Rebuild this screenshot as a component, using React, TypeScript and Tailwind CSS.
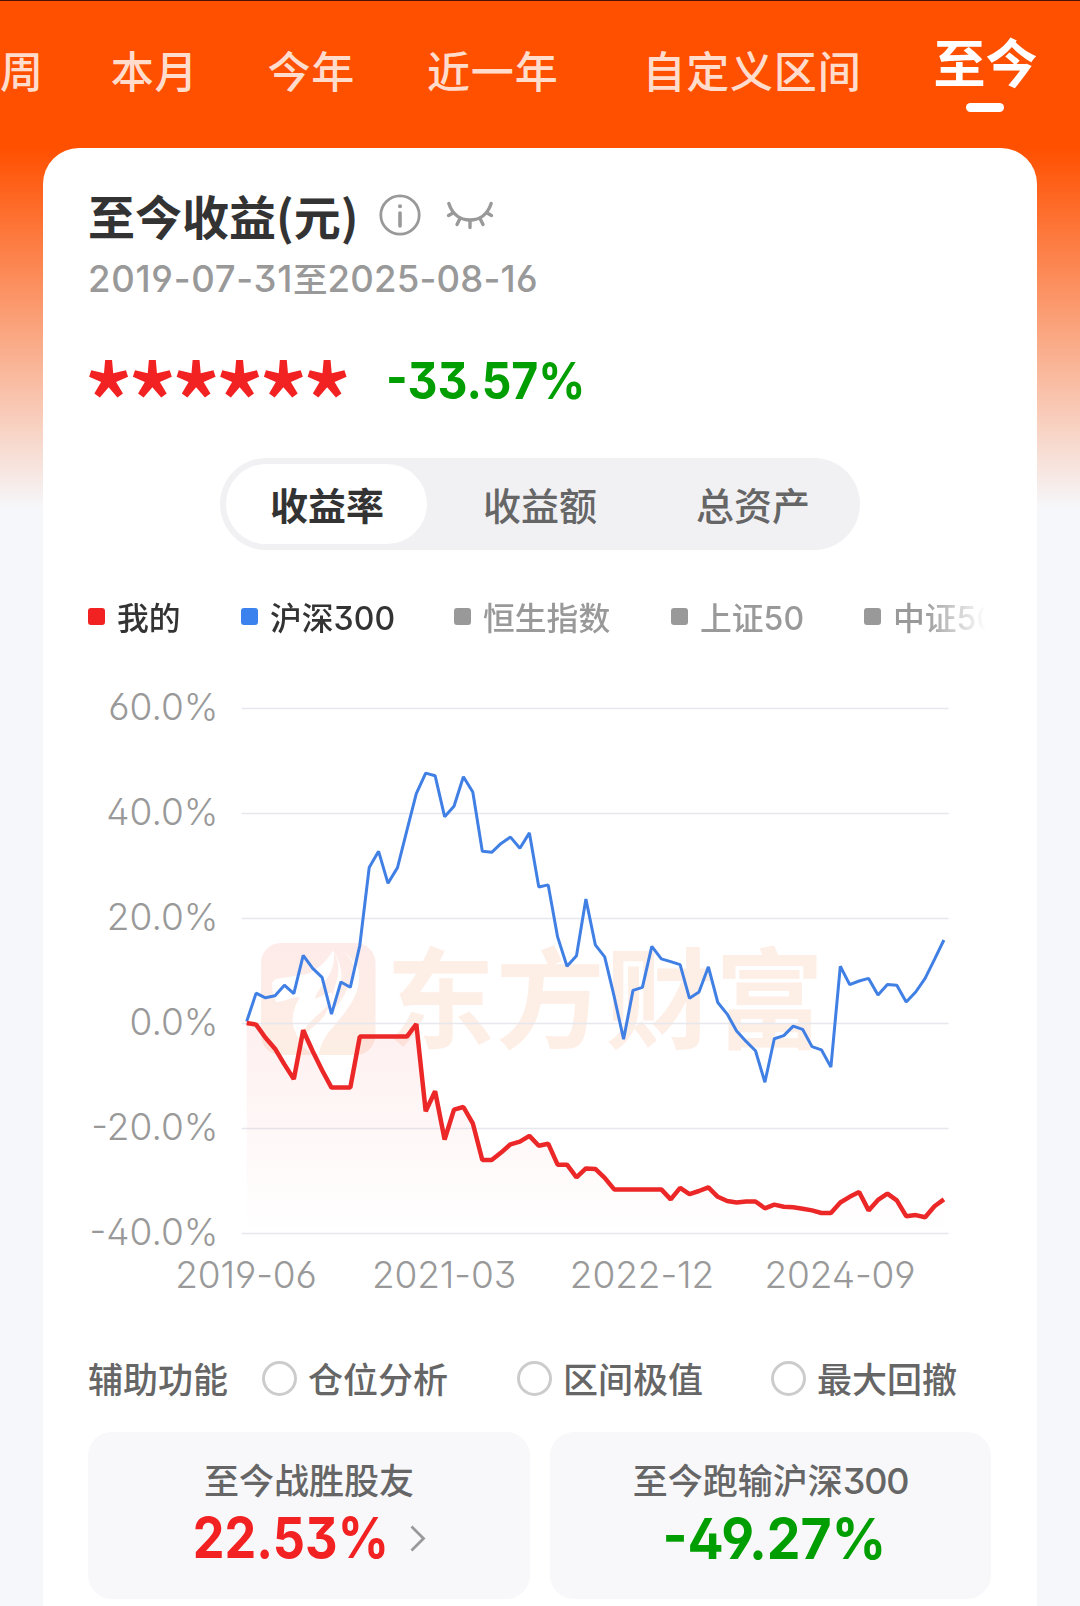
import clsx from 'clsx';

const tabs = [
  { label: '周', className: '' },
  { label: '本月', className: 'ml-[67px]' },
  { label: '今年', className: 'ml-[69px]' },
  { label: '近一年', className: 'ml-[72px]' },
  { label: '自定义区间', className: 'ml-[84px]' },
];

const segments = ['收益率', '收益额', '总资产'];

const legend = [
  { name: '我的', code: '', width: 'w-[153px]', dot: 'bg-[#f32222]', text: 'text-[#333]' },
  { name: '沪深', code: '300', width: 'w-[213px]', dot: 'bg-[#3b82ee]', text: 'text-[#333]' },
  { name: '恒生指数', code: '', width: 'w-[217px]', dot: 'bg-[#999]', text: 'text-[#999]' },
  { name: '上证', code: '50', width: 'w-[193px]', dot: 'bg-[#999]', text: 'text-[#999]' },
  { name: '中证', code: '500', width: 'w-[160px]', dot: 'bg-[#999]', text: 'text-[#999]' },
];

const helpers = [
  { label: '仓位分析', className: 'ml-[34px]' },
  { label: '区间极值', className: 'ml-[69px]' },
  { label: '最大回撤', className: 'ml-[68px]' },
];

// monthly returns in percent
const hs300 = [
  0.4, 5.8, 4.9, 5.3, 7.3, 5.7, 13.0, 10.5, 8.8, 1.8, 7.9, 6.9, 14.9, 29.7, 32.8, 26.7, 29.7, 36.8,
  43.8, 47.7, 47.2, 39.4, 41.4, 47.0, 44.1, 32.8, 32.6, 34.3, 35.5, 33.4, 36.3, 26.0, 26.4, 16.5,
  10.9, 12.9, 23.7, 15.0, 12.7, 5.1, -3.0, 6.3, 6.9, 14.7, 12.3, 11.8, 11.2, 4.8, 6.0, 10.8, 4.0,
  1.8, -1.4, -3.4, -5.2, -11.2, -2.9, -2.3, -0.5, -1.1, -4.4, -5.0, -8.3, 10.9, 7.4, 8.1, 8.6, 5.4,
  7.4, 7.3, 4.1, 6.0, 8.6, 12.2, 15.9,
];

const mine = [
  0.1, -0.2, -2.7, -4.8, -7.8, -10.6, -1.3, -5.3, -8.9, -12.2, -12.2, -12.2, -2.5, -2.5, -2.5, -2.5,
  -2.5, -2.5, -0.1, -16.7, -12.9, -22.1, -16.4, -15.9, -19.0, -26.0, -26.0, -24.6, -23.0, -22.5,
  -21.4, -23.3, -22.9, -26.9, -26.9, -29.3, -27.6, -27.7, -29.4, -31.6, -31.6, -31.6, -31.6, -31.6,
  -31.6, -33.5, -31.3, -32.5, -31.9, -31.2, -33.0, -33.8, -34.1, -33.9, -33.9, -35.2, -34.5, -34.9,
  -35.0, -35.3, -35.6, -36.1, -36.1, -34.1, -33.0, -32.1, -35.6, -33.6, -32.4, -33.7, -36.7, -36.5,
  -36.9, -34.8, -33.5,
];

const X0 = 158.7;
const STEP = 9.422;
const ZERO = 343.5;
const px = (i: number) => X0 + i * STEP;
const py = (v: number) => ZERO - v * 5.25;
const toLine = (data: number[]) => data.map((v, i) => `${px(i).toFixed(1)},${py(v).toFixed(1)}`).join(' ');

const yTicks = [60, 40, 20, 0, -20, -40];
const xTicks = [
  { label: '2019-06', x: 158 },
  { label: '2021-03', x: 356 },
  { label: '2022-12', x: 554 },
  { label: '2024-09', x: 752 },
];

const NUM = 'font-["Inter",sans-serif] [font-feature-settings:"ss01"]';

const InfoIcon = () => (
  <svg width="42" height="42" viewBox="0 0 42 42" fill="none" stroke="#999" className="shrink-0">
    <circle cx="21" cy="21" r="19.2" strokeWidth="2.8" />
    <circle cx="21" cy="12.3" r="2" fill="#999" stroke="none" />
    <path d="M21 19v13" strokeWidth="3.6" strokeLinecap="round" />
  </svg>
);

const ClosedEyeIcon = () => (
  <svg width="48" height="30" viewBox="0 0 48 30" fill="none" stroke="#999" strokeWidth="3.4" strokeLinecap="round" className="shrink-0">
    <path d="M2.8 3.5C6.5 14.5 14.5 20 24 20s17.5-5.5 21.2-16.5" />
    <path d="M7 13l-4.5 2.5M14 18.5l-3 6M24 20.5v7M34 18.5l3 6M41 13l4.5 2.5" />
  </svg>
);

const Watermark = () => (
  <g>
    <rect x="173" y="263" width="114.5" height="112" rx="20" fill="url(#logo)" />
    {/* head and neck */}
    <path
      fill="#fff"
      d="M184 303c2-4 6-5 11-5l24-4c9-3 18-11 25-22l2-1c1 9-1 18-6 26-8 12-13 17-13 22 5-2 14-7 17-6 1 4-3 12-10 18-9 8-18 16-23 28-6-9-8-18-5-28 1-6 4-10 6-14-9 0-17 5-24 5-3-6-4-13-4-19z"
    />
    {/* mane */}
    <path
      fill="#fff"
      d="M246 272c5 9 6 19 2 31-4 13-6 28-16 38-9 8-17 14-20 22 5 7 11 10 19 12 1-9 4-15 9-22 14-17 29-32 31-52 1-10-2-18-5-22-2 26-10 40-22 52 9-17 15-39 2-59z"
    />
    <path fill="#fff" d="M256 272c9 8 14 18 11 33 6-12-1-27-11-33z" />
    <text
      x="298"
      y="360"
      fontSize="109"
      fontWeight="700"
      letterSpacing="0.7"
      fill="#fdeee6"
      className='font-["Noto_Sans_CJK_SC",sans-serif]'
    >
      东方财富
    </text>
  </g>
);

const Chart = () => (
  <svg width="903" height="620" viewBox="0 0 903 620" className="mt-[39px] block overflow-visible">
    <defs>
      <linearGradient id="logo" x1="0" y1="0" x2="0" y2="1">
        <stop offset="0" stopColor="#fdebe9" />
        <stop offset="1" stopColor="#fdeee4" />
      </linearGradient>
      <linearGradient id="area" x1="0" y1={py(0)} x2="0" y2={py(-40)} gradientUnits="userSpaceOnUse">
        <stop offset="0" stopColor="#f32222" stopOpacity="0.07" />
        <stop offset="1" stopColor="#f32222" stopOpacity="0" />
      </linearGradient>
    </defs>
    <Watermark />
    {yTicks.map((t) => (
      <g key={t}>
        <line x1="153.7" x2="860.7" y1={py(t)} y2={py(t)} stroke="#e6e8ee" strokeWidth="1.4" />
        <text
          x="130.5"
          y={py(t) + 11.3}
          textAnchor="end"
          fontSize="37"
          fill="#999"
          className={clsx(NUM, 'font-[360]')}
        >
          {t.toFixed(1)}%
        </text>
      </g>
    ))}
    <polygon points={`${px(0)},${py(-39)} ${toLine(mine)} ${px(74)},${py(-39)}`} fill="url(#area)" />
    <polyline points={toLine(hs300)} fill="none" stroke="#407fe4" strokeWidth="3" strokeLinejoin="bevel" />
    <polyline points={toLine(mine)} fill="none" stroke="#ec2727" strokeWidth="4.5" strokeLinejoin="bevel" />
    {xTicks.map((t) => (
      <text
        key={t.label}
        x={t.x}
        y="608"
        textAnchor="middle"
        fontSize="37"
        fill="#999"
        className={clsx(NUM, 'font-[360] tracking-[-0.1px]')}
      >
        {t.label}
      </text>
    ))}
  </svg>
);

export default function App() {
  return (
    <div className='h-[1606px] w-[1080px] overflow-hidden border-t border-[#4a1204] bg-[#f6f7fa] bg-[linear-gradient(180deg,#ff5000_0px,#ff5000_147px,#f6f7fa_507px)] font-["Noto_Sans_CJK_SC",sans-serif]'>
      <nav className="flex h-[147px] items-start whitespace-nowrap">
        {tabs.map((tab) => (
          <span
            key={tab.label}
            className={clsx('mt-[36px] text-[43px] leading-[64px] font-medium tracking-[0.8px] text-[#ffdccc]', tab.className)}
          >
            {tab.label}
          </span>
        ))}
        <div className="ml-[72px] flex flex-col items-center">
          <span className="mt-[24px] text-[52px] leading-[72px] font-bold text-white">至今</span>
          <span className="mt-[6px] h-[9px] w-[38px] rounded-full bg-white" />
        </div>
      </nav>

      <main className="ml-[43px] h-[1460px] w-[994px] rounded-t-[36px] bg-white pt-[39px] pr-[46px] pl-[45px]">
        <div className="flex h-14 items-center">
          <h1 className="text-[47px] leading-[56px] font-bold whitespace-nowrap text-[#333]">至今收益(元)</h1>
          <div className="ml-5 flex items-center gap-[25px]">
            <InfoIcon />
            <ClosedEyeIcon />
          </div>
        </div>
        <p className="mt-[14px] h-10 text-[34.5px] leading-10 font-medium whitespace-nowrap text-[#999]">
          <span className={clsx(NUM, 'text-[36.5px] font-[450] tracking-[0.7px]')}>2019-07-31</span>至
          <span className={clsx(NUM, 'text-[36.5px] font-[450] tracking-[0.2px]')}>2025-08-16</span>
        </p>

        <div className="mt-[54px] flex h-[60px] items-center whitespace-nowrap">
          <span className="-ml-[5px] w-[303px] pt-[36px] text-[106px] leading-[60px] font-medium tracking-[-7.6px] text-[#f32222]">
            ******
          </span>
          <span className={clsx(NUM, 'origin-left scale-x-[0.91] text-[51px] leading-[60px] font-bold text-[#009e00]')}>
            -33.57%
          </span>
        </div>

        <div className="mx-auto mt-[47px] flex h-[92px] w-[640px] rounded-full bg-[#f1f1f4] p-1.5">
          {segments.map((s, i) => (
            <button
              key={s}
              className={clsx(
                'h-20 shrink-0 rounded-full pb-0.5 pl-0.5 text-[38px]',
                i === 0 ? 'mr-1.5 w-[201px] bg-white font-bold text-[#333]' : 'w-[213px] font-medium text-[#666]',
              )}
            >
              {s}
            </button>
          ))}
        </div>

        <div className="mt-[43px] flex h-12 overflow-hidden whitespace-nowrap [mask-image:linear-gradient(90deg,#000_835px,transparent_898px)]">
          {legend.map((item) => (
            <div key={item.name} className={clsx('flex shrink-0 items-center', item.width)}>
              <i className={clsx('mr-3 mb-0.5 size-[17px] rounded-[3px]', item.dot)} />
              <span className={clsx('text-[31.8px] leading-10 font-medium', item.text)}>
                {item.name}
                <span className={clsx(NUM, 'text-[32px] font-[450]')}>{item.code}</span>
              </span>
            </div>
          ))}
        </div>

        <Chart />

        <div className="mt-[58px] flex h-10 items-center text-[35px] leading-10 font-medium whitespace-nowrap text-[#666]">
          <span>辅助功能</span>
          {helpers.map((h) => (
            <label key={h.label} className={clsx('flex items-center', h.className)}>
              <i className="mr-[11px] size-[35px] rounded-full border-3 border-[#ccc]" />
              {h.label}
            </label>
          ))}
        </div>

        <div className="mt-[34px] grid grid-cols-[442px_441px] gap-5 text-center">
          <section className="h-[167px] rounded-3xl bg-[#f8f8fa] pt-[25px]">
            <p className="text-[35px] leading-[44px] font-medium text-[#666]">至今战胜股友</p>
            <div className="mt-[7px] flex items-center justify-center">
              <span className={clsx(NUM, '-mx-3 scale-x-[0.885] text-[57px] leading-[60px] font-bold text-[#f32222]')}>
                22.53%
              </span>
              <svg width="16" height="27" viewBox="0 0 16 27" fill="none" stroke="#999" strokeWidth="2.8" className="ml-[21px]">
                <path d="M1.5 1.5l12 12-12 12" />
              </svg>
            </div>
          </section>
          <section className="h-[167px] rounded-3xl bg-[#f8f8fa] pt-[25px]">
            <p className="text-[35px] leading-[44px] font-medium text-[#666]">
              至今跑输沪深<span className={clsx(NUM, 'text-[36px] font-[450] tracking-[-1.2px]')}>300</span>
            </p>
            <div className={clsx(NUM, 'mt-[6px] scale-x-[0.94] pl-2 text-[57px] leading-[60px] font-bold text-[#009e00]')}>
              -49.27%
            </div>
          </section>
        </div>
      </main>
    </div>
  );
}
